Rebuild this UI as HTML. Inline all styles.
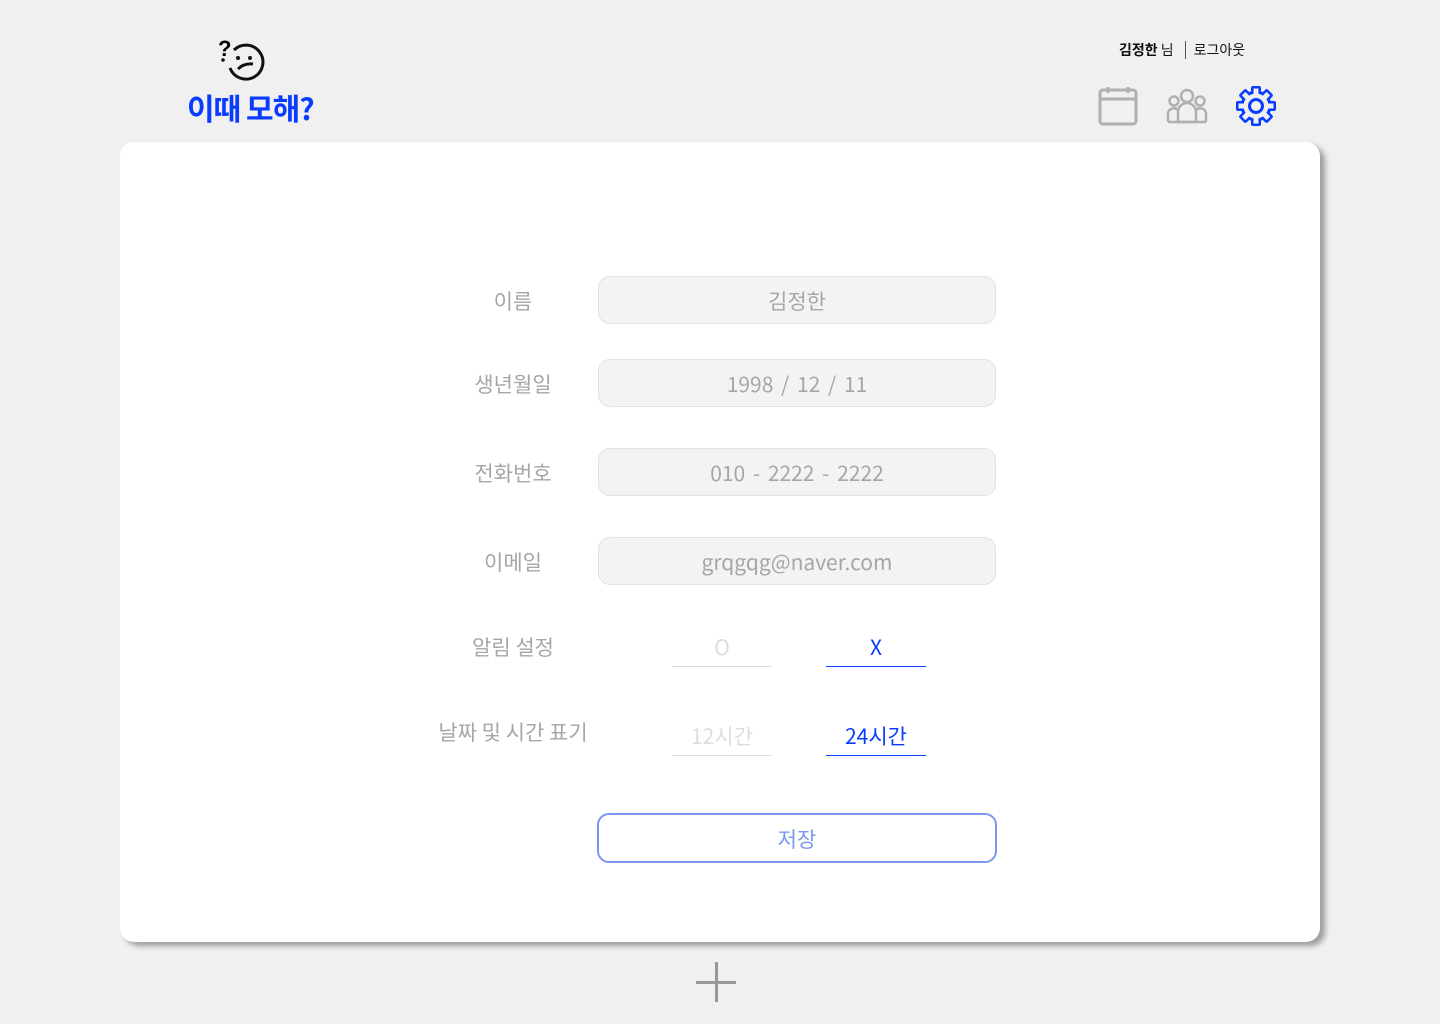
<!DOCTYPE html>
<html><head><meta charset="utf-8"><style>
body{margin:0;width:1440px;height:1024px;background:#f0f0f0;font-family:"Noto Sans CJK KR",sans-serif;position:relative;overflow:hidden}
.abs{position:absolute}
.card{left:120px;top:142px;width:1200px;height:800px;background:#fff;border-radius:14px;box-shadow:5px 4px 6px rgba(0,0,0,.35)}
.lbl{width:200px;left:413px;text-align:center;color:#a6a6a6;font-size:21px;line-height:30px}
.inp{left:598px;width:396px;height:46px;background:#f3f3f3;border:1.5px solid #e2e2e2;border-radius:12px;text-align:center;line-height:48px;color:#a6a6a6;font-size:21px}
.opt{width:100px;text-align:center;font-size:21px;height:34px;line-height:30px}
</style></head><body>
<svg class="abs" style="left:216px;top:36px" width="52" height="48" viewBox="0 0 52 48">
<text x="2" y="20" font-size="22" font-weight="bold" font-family="Liberation Sans">?</text>
<path d="M18 14 A17 17 0 1 1 14 32" fill="none" stroke="#111" stroke-width="3"/>
<circle cx="7" cy="24" r="1.8" fill="#111"/><circle cx="22" cy="22" r="2" fill="#111"/><circle cx="34" cy="22" r="2" fill="#111"/>
<path d="M22 33 Q28 27 37 28" fill="none" stroke="#111" stroke-width="3"/>
</svg>
<div class="abs" style="left:187px;top:84px;font-size:30px;font-weight:bold;color:#0a3cff;letter-spacing:-1px;line-height:46px">이때 모해?</div>
<div class="abs" style="left:1119px;top:40px;font-size:14px;color:#111;line-height:20px"><b>김정한</b> 님<span style="display:inline-block;width:1px;height:18px;background:#555;margin:0 8px 0 11px;vertical-align:-4px"></span>로그아웃</div>
<svg class="abs" style="left:1098px;top:86px" width="40" height="40" viewBox="0 0 40 40" fill="none" stroke="#b0b0b0" stroke-width="3"><rect x="2" y="4" width="36" height="34" rx="3"/><line x1="2" y1="13" x2="38" y2="13"/><line x1="10" y1="1" x2="10" y2="7"/><line x1="30" y1="1" x2="30" y2="7"/></svg>
<svg class="abs" style="left:1166px;top:88px" width="42" height="36" viewBox="0 0 42 36" fill="none" stroke="#b0b0b0" stroke-width="2.5"><circle cx="21" cy="8" r="6"/><circle cx="8" cy="13" r="4.5"/><circle cx="34" cy="13" r="4.5"/><path d="M12 34V24a9 9 0 0 1 18 0v10z"/><path d="M2 34V25a6 6 0 0 1 10-3M40 34V25a6 6 0 0 0-10-3M2 34h38"/></svg>
<svg class="abs" style="left:1235px;top:85px" width="42" height="42" viewBox="0 0 42 42">
<g transform="translate(21 21)">
<g fill="#0a3cff">
<rect x="-5" y="-20" width="10" height="10" rx="2"/><rect x="-5" y="-20" width="10" height="10" rx="2" transform="rotate(45)"/><rect x="-5" y="-20" width="10" height="10" rx="2" transform="rotate(90)"/><rect x="-5" y="-20" width="10" height="10" rx="2" transform="rotate(135)"/><rect x="-5" y="-20" width="10" height="10" rx="2" transform="rotate(180)"/><rect x="-5" y="-20" width="10" height="10" rx="2" transform="rotate(225)"/><rect x="-5" y="-20" width="10" height="10" rx="2" transform="rotate(270)"/><rect x="-5" y="-20" width="10" height="10" rx="2" transform="rotate(315)"/>
<circle r="15.5"/></g>
<g fill="#f0f0f0">
<rect x="-2.5" y="-17.5" width="5" height="8"/><rect x="-2.5" y="-17.5" width="5" height="8" transform="rotate(45)"/><rect x="-2.5" y="-17.5" width="5" height="8" transform="rotate(90)"/><rect x="-2.5" y="-17.5" width="5" height="8" transform="rotate(135)"/><rect x="-2.5" y="-17.5" width="5" height="8" transform="rotate(180)"/><rect x="-2.5" y="-17.5" width="5" height="8" transform="rotate(225)"/><rect x="-2.5" y="-17.5" width="5" height="8" transform="rotate(270)"/><rect x="-2.5" y="-17.5" width="5" height="8" transform="rotate(315)"/>
<circle r="12.5"/></g>
<circle r="6.5" fill="none" stroke="#0a3cff" stroke-width="3"/></g></svg>
<div class="abs card"></div>
<div class="abs lbl" style="top:286px">이름</div>
<div class="abs inp" style="top:276px">김정한</div>
<div class="abs lbl" style="top:369px">생년월일</div>
<div class="abs inp" style="top:359px;word-spacing:3px">1998 / 12 / 11</div>
<div class="abs lbl" style="top:458px">전화번호</div>
<div class="abs inp" style="top:448px;word-spacing:3px">010 - 2222 - 2222</div>
<div class="abs lbl" style="top:547px">이메일</div>
<div class="abs inp" style="top:537px">grqgqg@naver.com</div>
<div class="abs lbl" style="top:632px">알림 설정</div>
<div class="abs opt" style="left:672px;top:632px;color:#ddd;border-bottom:1px solid #ddd">O</div>
<div class="abs opt" style="left:826px;top:632px;color:#0a3cff;border-bottom:1.5px solid #0a3cff">X</div>
<div class="abs lbl" style="top:717px">날짜 및 시간 표기</div>
<div class="abs opt" style="left:672px;top:721px;color:#ddd;border-bottom:1px solid #ddd">12시간</div>
<div class="abs opt" style="left:826px;top:721px;color:#0a3cff;border-bottom:1.5px solid #0a3cff">24시간</div>
<div class="abs" style="left:597px;top:813px;width:396px;height:46px;border:2px solid #7b96f2;border-radius:12px;text-align:center;line-height:48px;color:#7b96f2;font-size:21px">저장</div>
<div class="abs" style="left:696px;top:981px;width:40px;height:3px;background:#999"></div>
<div class="abs" style="left:715px;top:962px;width:3px;height:40px;background:#999"></div>
</body></html>
